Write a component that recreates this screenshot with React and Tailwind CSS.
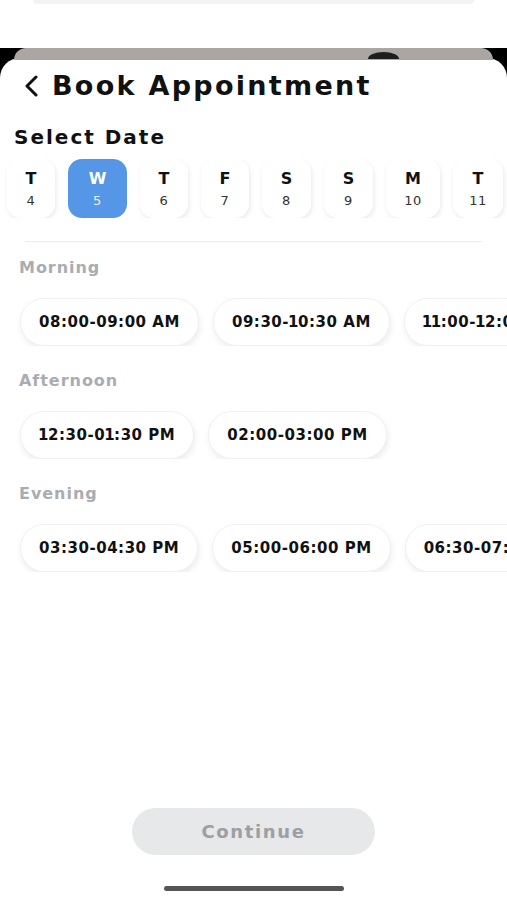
import React from 'react'

const DAYS = [
  { d: 'T', n: 4,  w: 'w-[48px]' },
  { d: 'W', n: 5,  w: 'w-[59px]', active: true },
  { d: 'T', n: 6,  w: 'w-[48px]' },
  { d: 'F', n: 7,  w: 'w-[48px]' },
  { d: 'S', n: 8,  w: 'w-[49px]' },
  { d: 'S', n: 9,  w: 'w-[49px]' },
  { d: 'M', n: 10, w: 'w-[54px]' },
  { d: 'T', n: 11, w: 'w-[50px]' },
]

const SLOTS = [
  { label: 'Morning',   times: ['08:00-09:00 AM', '09:30-10:30 AM', '11:00-12:00 PM'] },
  { label: 'Afternoon', times: ['12:30-01:30 PM', '02:00-03:00 PM'] },
  { label: 'Evening',   times: ['03:30-04:30 PM', '05:00-06:00 PM', '06:30-07:30 PM'] },
]

const font = "font-['DejaVu_Sans',sans-serif]"

// the "1" in the original font is narrow, tighten it a bit
function Time({ t }) {
  return t.split('').map((c, i) =>
    c === '1' ? <span key={i} className="-mx-px">1</span> : c
  )
}

export default function App() {
  return (
    <div className={`w-[507px] h-[900px] flex flex-col overflow-hidden bg-white ${font}`}>
      {/* page behind the sheet */}
      <div className="h-[48px] shrink-0 bg-white">
        <div className="mx-[33px] h-[4px] rounded-b-md bg-[#f3f3f3]" />
      </div>

      <div className="flex-1 flex flex-col bg-black">
        {/* stacked sheet edge */}
        <div className="relative mx-[14px] h-[12px] shrink-0 rounded-t-[12px] bg-[#aca6a2]">
          <div className="absolute left-[354px] top-[4px] w-[31px] h-[7px] rounded-[16px_16px_0_0/7px_7px_0_0] bg-[#1e1e1e]" />
        </div>

        {/* sheet */}
        <div className="-mt-[2px] flex-1 flex flex-col rounded-t-[20px] bg-white">
          {/* header */}
          <div className="flex items-center pt-[12px] pl-[24px]">
            <svg width="15" height="22" viewBox="0 0 15 22" className="mr-[13px]">
              <polyline points="12,2 3,11 12,20" fill="none" stroke="#111" strokeWidth="3" strokeLinecap="round" strokeLinejoin="round" />
            </svg>
            <h1 className="text-[27px] leading-[32px] font-bold tracking-[0.085em] text-[#111]">Book Appointment</h1>
          </div>

          <h2 className="mt-[23px] pl-[14px] text-[20px] leading-[24px] font-bold tracking-[0.1em] text-[#111]">Select Date</h2>

          {/* dates */}
          <div className="mt-[10px] flex gap-[13px] pl-[7px] overflow-hidden">
            {DAYS.map((x, i) => (
              <div key={i}
                className={`${x.w} h-[59px] shrink-0 rounded-[14px] flex flex-col items-center pt-[10px] ${
                  x.active ? 'bg-[#5596e6] text-white' : 'bg-white text-[#111] shadow-[1px_2px_5px_rgba(0,0,0,0.09)]'
                }`}>
                <span className="text-[16px] leading-[20px] font-bold">{x.d}</span>
                <span className={`mt-[3px] text-[13px] leading-[17px] tracking-[0.04em] ${x.active ? 'text-[#e8f0fc]' : 'text-[#333]'}`}>{x.n}</span>
              </div>
            ))}
          </div>

          <div className="mt-[23px] mx-[25px] h-px bg-[#ececec]" />

          {/* time slots */}
          <div className="mt-[16px] flex flex-col">
            {SLOTS.map((s, i) => (
              <div key={s.label} className={i ? 'mt-[25px]' : ''}>
                <p className="pl-[19px] text-[16px] leading-[20px] font-bold tracking-[0.06em] text-[#a9adb3]">{s.label}</p>
                <div className="mt-[20px] flex gap-[14px] pl-[20px] overflow-hidden">
                  {s.times.map(t => (
                    <div key={t}
                      className="h-[48px] shrink-0 px-[18px] rounded-full bg-white flex items-center border border-[#f1f1f1] shadow-[1px_3px_6px_rgba(0,0,0,0.08)]">
                      <span className="text-[15px] font-bold tracking-[0.035em] text-[#111] whitespace-nowrap"><Time t={t} /></span>
                    </div>
                  ))}
                </div>
              </div>
            ))}
          </div>

          {/* footer */}
          <div className="mt-auto flex flex-col items-center pb-[9px]">
            <button className="w-[243px] h-[47px] rounded-full bg-[#e6e8ea] text-[18px] font-bold tracking-[0.09em] text-[#9c9fa3]">
              Continue
            </button>
            <div className="mt-[31px] w-[180px] h-[5px] rounded-full bg-[#555]" />
          </div>
        </div>
      </div>
    </div>
  )
}
